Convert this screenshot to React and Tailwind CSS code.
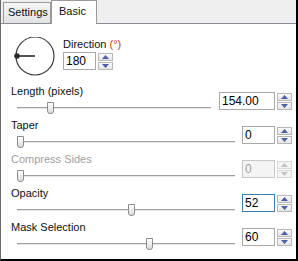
import React from "react";

const Spin = ({ disabled }) => (
  <div className="flex flex-col gap-px ml-[2px]">
    {[0, 1].map((i) => (
      <div
        key={i}
        className={`w-[15px] h-[8px] border flex items-center justify-center ${
          disabled ? "border-[#d8d8d8] bg-[#f4f4f4]" : "border-[#b8b8b8] bg-gradient-to-b from-[#fafafa] to-[#e4e4e4]"
        }`}
      >
        <svg width="7" height="4" viewBox="0 0 7 4">
          <path
            d={i === 0 ? "M0 4 L3.5 0 L7 4 Z" : "M0 0 L3.5 4 L7 0 Z"}
            fill={disabled ? "#c4c4c4" : "#4d5fa8"}
          />
        </svg>
      </div>
    ))}
  </div>
);

const Field = ({ value, w, focused, disabled }) => (
  <div className="flex items-center">
    <div
      className={`h-[18px] border flex items-center pl-[2px] text-[12px] ${w} ${
        focused
          ? "border-[#3c7fb1] bg-white text-black"
          : disabled
          ? "border-[#c8c8c8] bg-[#f4f4f4] text-[#a0a0a0]"
          : "border-[#a9a9a9] bg-white text-black"
      }`}
    >
      {value}
    </div>
    <Spin disabled={disabled} />
  </div>
);

const Slider = ({ pos, end }) => (
  <div className={`relative h-[13px] ml-[16px] ${end}`}>
    <div className="absolute left-0 right-0 top-[5px] h-[3px] border-t border-[#a0a0a0] border-b border-b-white bg-[#e6e6e6]" />
    <div
      className="absolute top-0 w-[7px] h-[12px] border border-[#8c8c8c] bg-gradient-to-b from-white to-[#dcdcdc] rounded-b-[3px]"
      style={{ left: pos }}
    />
  </div>
);

const Row = ({ label, value, pos, sliderW, fieldW, focused, disabled }) => (
  <div className="flex h-[34px]">
    <div className="flex-1">
      <div className={`pl-[10px] h-[18px] leading-[15px] text-[11px] ${disabled ? "text-[#a0a0a0]" : "text-[#111]"}`}>
        {label}
      </div>
      <Slider pos={pos} end={sliderW} />
    </div>
    <Field value={value} w={fieldW} focused={focused} disabled={disabled} />
  </div>
);

export default function App() {
  return (
    <div
      className="w-[298px] h-[261px] bg-white border-l border-l-[#6a6a6a] border-r-2 border-r-black border-b-2 border-b-black flex flex-col"
      style={{ fontFamily: '"Liberation Sans", Arial, sans-serif' }}
    >
      <div className="h-[24px] bg-[#efefef] border-b border-[#898c95] flex items-end pl-[2px] shrink-0">
        <div className="h-[21px] w-[48px] px-[4px] border border-b-0 border-[#9a9a9a] bg-gradient-to-b from-[#f6f6f6] to-[#e2e2e2] text-[11px] text-[#111] leading-[19px]">
          Settings
        </div>
        <div className="h-[24px] w-[46px] -mb-px px-[7px] border border-b-0 border-[#9a9a9a] bg-white text-[11px] text-[#111] leading-[20px]">
          Basic
        </div>
      </div>

      <div className="flex h-[60px] pt-[13px]">
        <div className="w-[62px] pl-[13px]">
          <svg width="42" height="40" viewBox="0 0 42 40">
            <circle cx="21" cy="19" r="19" fill="none" stroke="#3a3a3a" strokeWidth="1.2" />
            <line x1="2" y1="19" x2="21" y2="19" stroke="#555" strokeWidth="2" />
            <circle cx="3" cy="19" r="2.8" fill="#2a2a2a" />
          </svg>
        </div>
        <div className="flex flex-col">
          <div className="text-[11px] leading-[14px] text-[#111]">
            Direction <span className="text-[#c0392b]">(°)</span>
          </div>
          <div className="mt-[1px]">
            <Field value="180" w="w-[33px]" />
          </div>
        </div>
      </div>

      <div className="flex flex-col pr-[4px]">
        <Row label="Length (pixels)" value="154.00" pos={30} sliderW="mr-[8px]" fieldW="w-[56px]" />
        <Row label="Taper" value="0" pos={0} sliderW="mr-[7px]" fieldW="w-[33px]" />
        <Row label="Compress Sides" value="0" pos={0} sliderW="mr-[7px]" fieldW="w-[33px]" disabled />
        <Row label="Opacity" value="52" pos={111} sliderW="mr-[7px]" fieldW="w-[33px]" focused />
        <Row label="Mask Selection" value="60" pos={129} sliderW="mr-[7px]" fieldW="w-[33px]" />
      </div>
    </div>
  );
}
